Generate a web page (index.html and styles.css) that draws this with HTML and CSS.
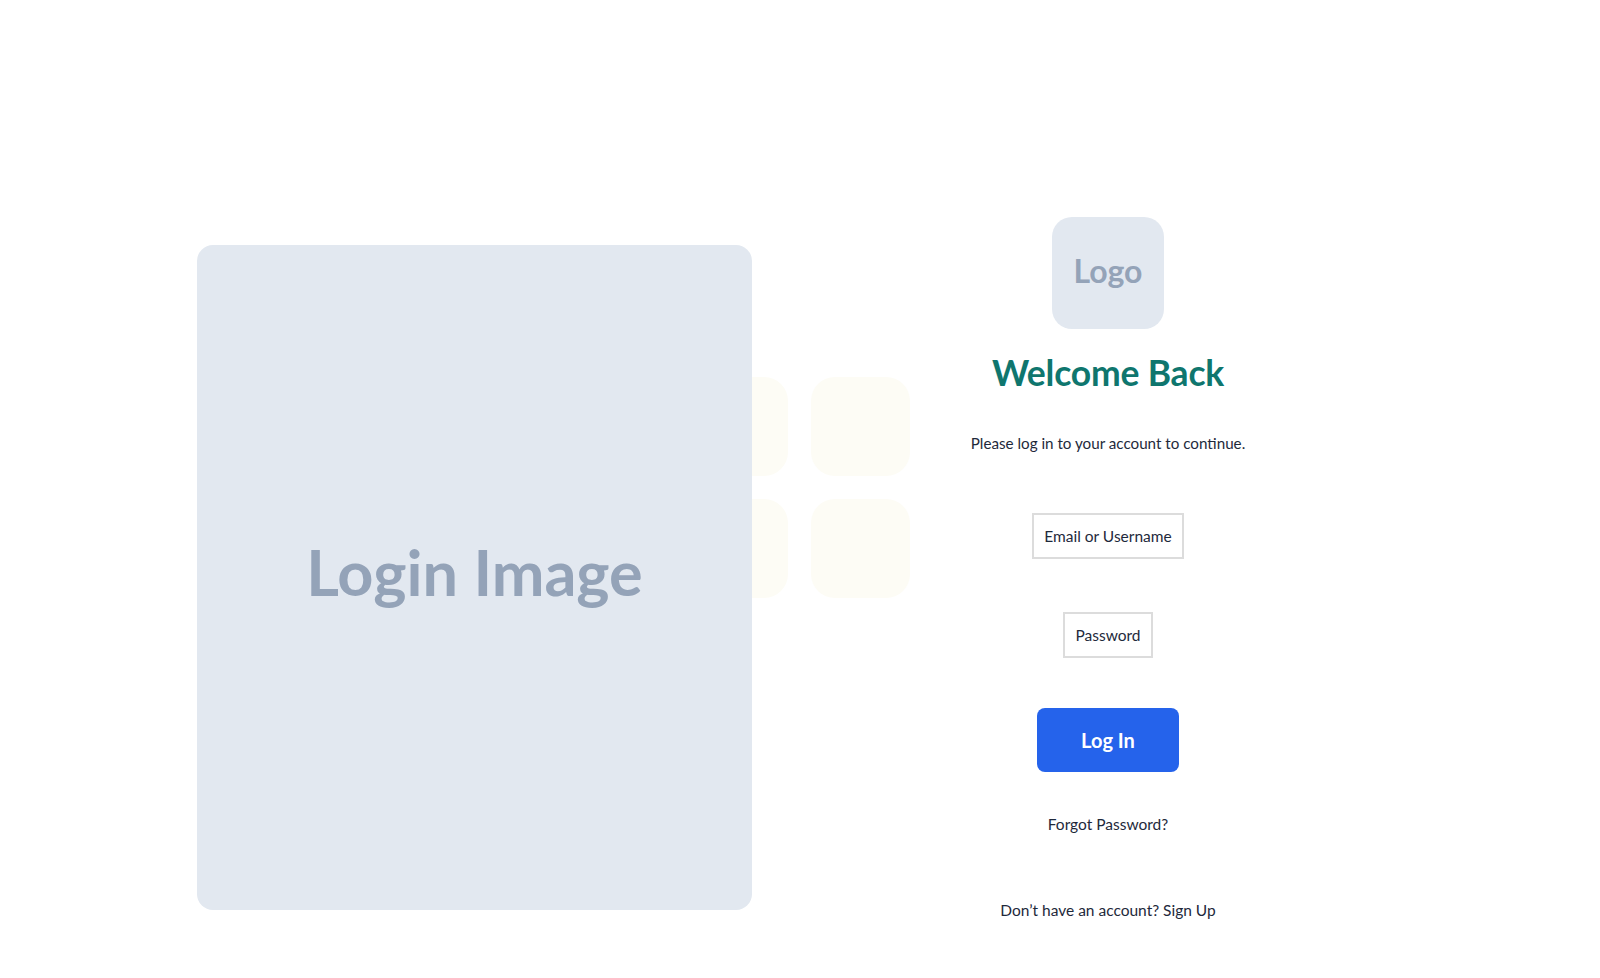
FILE: index.html
```html
<!DOCTYPE html>
<html lang="en">
<head>
<meta charset="utf-8">
<title>Login</title>
<link rel="stylesheet" href="styles.css">
</head>
<body>
<main class="page">
  <section class="visual">
    <div class="tiles" aria-hidden="true">
      <span class="tile"></span><span class="tile"></span>
      <span class="tile"></span><span class="tile"></span>
    </div>
    <div class="image-panel">Login Image</div>
  </section>
  <section class="form-col">
    <div class="logo">Logo</div>
    <h1 class="title">Welcome Back</h1>
    <p class="subtitle">Please log in to your account to continue.</p>
    <div class="field field-email">Email or Username</div>
    <div class="field field-password">Password</div>
    <button class="btn" type="button">Log In</button>
    <a class="forgot" href="#">Forgot Password?</a>
    <p class="signup">Don’t have an account? Sign Up</p>
  </section>
</main>
</body>
</html>
```

FILE: styles.css
```css
* { box-sizing: border-box; }
html, body { margin: 0; padding: 0; background: #ffffff; }
body {
  font-family: "Lato", "Liberation Sans", sans-serif;
  color: #1e293b;
  width: 1600px;
  height: 978px;
  overflow: hidden;
}
.page {
  display: grid;
  grid-template-columns: 555px 602px;
  column-gap: 55px;
  padding-left: 197px;
  padding-top: 217px;
  align-items: start;
}
.visual {
  position: relative;
  margin-top: 28px;
}
.tiles {
  position: absolute;
  left: 492px;
  top: 132px;
  display: grid;
  grid-template-columns: 99px 99px;
  grid-auto-rows: 99px;
  gap: 23px;
  z-index: 0;
}
.tile {
  display: block;
  background: #fdfcf5;
  border-radius: 24px;
}
.image-panel {
  position: relative;
  z-index: 1;
  width: 555px;
  height: 665px;
  background: #e2e8f0;
  border-radius: 16px;
  display: flex;
  align-items: center;
  justify-content: center;
  font-family: "Lato", sans-serif;
  font-weight: 700;
  font-size: 63px;
  color: #94a3b8;
  padding-bottom: 12px;
}
.form-col {
  display: flex;
  flex-direction: column;
  align-items: center;
  text-align: center;
}
.logo {
  width: 112px;
  height: 112px;
  border-radius: 20px;
  background: #e2e8f0;
  color: #94a3b8;
  font-family: "Lato", sans-serif;
  font-weight: 700;
  font-size: 32px;
  display: flex;
  align-items: center;
  justify-content: center;
  padding-bottom: 6px;
}
.title {
  margin: 24px 0 0;
  font-size: 35.5px;
  line-height: 40px;
  font-weight: 700;
  color: #0f766e;
  letter-spacing: -0.2px;
}
.subtitle {
  margin: 38px 0 0;
  font-size: 15.2px;
  line-height: 24px;
  color: #1e293b;
}
.field {
  border: 2px solid #dcdcdc;
  font-size: 15.5px;
  line-height: 24px;
  padding: 9px 10px;
  color: #1e293b;
  background: #fff;
}
.field-email { margin-top: 58px; }
.field-password { margin-top: 53px; }
.btn {
  margin-top: 50px;
  width: 142px;
  height: 64px;
  border: none;
  border-radius: 8px;
  background: #2563eb;
  color: #ffffff;
  font-family: "Lato", sans-serif;
  font-weight: 700;
  font-size: 20px;
  cursor: pointer;
}
.forgot {
  margin-top: 40px;
  font-size: 15.5px;
  line-height: 24px;
  color: #1e293b;
  text-decoration: none;
}
.signup {
  margin: 62px 0 0;
  font-size: 15.5px;
  line-height: 24px;
  color: #1e293b;
}
```
